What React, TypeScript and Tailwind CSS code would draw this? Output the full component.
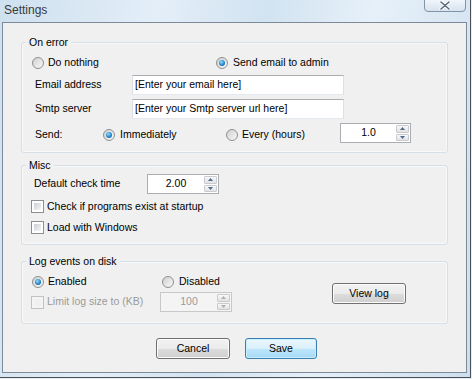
import React from "react";

const font = { fontFamily: '"Liberation Sans", Arial, sans-serif' };

function Radio({ checked, disabled }: { checked?: boolean; disabled?: boolean }) {
  return (
    <span
      className={
        "inline-flex w-[12px] h-[12px] rounded-full border items-center justify-center shrink-0 " +
        (disabled
          ? "border-[#b8b8b8] bg-[#f4f4f4]"
          : "border-[#8e8f8f] bg-[linear-gradient(135deg,#cfd0d2,#f8f8f8)]")
      }
    >
      {checked && (
        <span className="w-[6px] h-[6px] rounded-full bg-[radial-gradient(circle_at_40%_35%,#8fdcff,#2a86c8_55%,#0c4f8a)]" />
      )}
    </span>
  );
}

function Check({ disabled }: { disabled?: boolean }) {
  return (
    <span
      className={
        "inline-flex w-[13px] h-[13px] border p-[2px] shrink-0 " +
        (disabled ? "border-[#c2c2c2] bg-[#f4f4f4]" : "border-[#8e8f8f] bg-white")
      }
    >
      <span
        className={
          "block w-full h-full " +
          (disabled ? "bg-[#f0f0f0]" : "bg-[linear-gradient(135deg,#cbcfd5,#f6f6f6)]")
        }
      />
    </span>
  );
}

function Arrow({ up, disabled }: { up?: boolean; disabled?: boolean }) {
  return (
    <svg width="5" height="3" viewBox="0 0 5 3">
      <path d={up ? "M0 3 L2.5 0 L5 3Z" : "M0 0 L2.5 3 L5 0Z"} fill={disabled ? "#b0b0b0" : "#4f6b8c"} />
    </svg>
  );
}

function Spin({ value, w, disabled }: { value: string; w: string; disabled?: boolean }) {
  return (
    <div
      className={
        "flex h-[20px] border " +
        w +
        (disabled ? " border-[#c8c8c8] bg-[#f4f4f4] text-[#9a9a9a]" : " border-[#abadb3] bg-white text-black")
      }
    >
      <div className="flex-1 flex items-center justify-center">{value}</div>
      <div className="flex flex-col w-[13px] my-[1px] mr-[1px] gap-[1px]">
        <div className="flex-1 border border-[#c9cbd0] rounded-[1px] bg-[linear-gradient(#f8f8f8,#e2e2e2)] flex items-center justify-center">
          <Arrow up disabled={disabled} />
        </div>
        <div className="flex-1 border border-[#c9cbd0] rounded-[1px] bg-[linear-gradient(#f8f8f8,#e2e2e2)] flex items-center justify-center">
          <Arrow disabled={disabled} />
        </div>
      </div>
    </div>
  );
}

function TextBox({ value }: { value: string }) {
  return (
    <div className="flex items-center h-[20px] w-[212px] bg-white border border-[#dbdfe6] border-t-[#abadb3] border-b-[#e3e9ef] pl-[2px] text-black whitespace-nowrap overflow-hidden">
      {value}
    </div>
  );
}

function Btn({ label, primary, w }: { label: string; primary?: boolean; w: string }) {
  return (
    <div
      className={
        "flex items-center justify-center h-[21px] rounded-[3px] border text-black " +
        w +
        (primary
          ? " border-[#3c7fb1] bg-[linear-gradient(#eaf6fd_0%,#d9f0fc_50%,#bee6fd_50%,#a7d9f5_100%)] shadow-[inset_0_0_0_1px_#c6effd]"
          : " border-[#707070] bg-[linear-gradient(#f2f2f2_0%,#ebebeb_50%,#dddddd_50%,#cfcfcf_100%)] shadow-[inset_0_0_0_1px_#fcfcfc]")
      }
    >
      {label}
    </div>
  );
}

function Group({ title, children, className }: { title: string; children: React.ReactNode; className?: string }) {
  return (
    <div
      className={
        "relative ml-[18px] w-[427px] border border-[#d5dfe5] rounded-[3px] shadow-[inset_0_0_0_1px_#ffffff80] " +
        (className || "")
      }
    >
      <span className="absolute left-[4px] -top-[8px] px-[3px] bg-[#f0f0f0] leading-[14px] text-black">{title}</span>
      {children}
    </div>
  );
}

export default function App() {
  return (
    <div className="w-[472px] h-[379px] bg-[#e9eef3] text-[10.5px]" style={font}>
      <div className="w-[471px] h-[378px] border-r border-b border-[#4a4f55] bg-[linear-gradient(100deg,#cfe0ef_0%,#e3eef8_30%,#d2e3f1_50%,#e6f0f9_70%,#cddfee_100%)] flex flex-col">
        <div className="h-[22px] flex items-start justify-between">
          <span className="text-[12px] text-[#3a3a3a] pl-[4px] pt-[3px] leading-[14px]">Settings</span>
          <div className="mr-[4px] -mt-[1px] w-[42px] h-[13px] rounded-b-[4px] border border-[#8394a8] bg-[linear-gradient(#f0f5fa,#d6e3ef)] flex items-center justify-center">
            <svg width="12" height="9" viewBox="0 0 12 9">
              <path d="M2 1 L10 8 M10 1 L2 8" stroke="#ffffff" strokeWidth="3.2" strokeLinecap="round" />
              <path d="M2 1 L10 8 M10 1 L2 8" stroke="#5e6a78" strokeWidth="1.6" strokeLinecap="round" />
            </svg>
          </div>
        </div>
        <div className="ml-[2px] w-[465px] h-[351px] border border-[#7d8a99] bg-[#f0f0f0] flex flex-col">
          {/* On error */}
          <Group title="On error" className="mt-[19px] pt-[13px] pb-[9px]">
            <div className="flex items-center h-[14px] pl-[10px]">
              <div className="w-[184px] flex items-center gap-[4px]">
                <Radio />
                <span>Do nothing</span>
              </div>
              <div className="flex items-center gap-[5px]">
                <Radio checked />
                <span>Send email to admin</span>
              </div>
            </div>
            <div className="flex items-center mt-[5px] pl-[13px]">
              <span className="w-[97px]">Email address</span>
              <TextBox value="[Enter your email here]" />
            </div>
            <div className="flex items-center mt-[4px] pl-[13px]">
              <span className="w-[97px]">Smtp server</span>
              <TextBox value="[Enter your Smtp server url here]" />
            </div>
            <div className="flex items-center mt-[4px] pl-[13px]">
              <span className="w-[68px] pt-[3px]">Send:</span>
              <div className="w-[123px] flex items-center gap-[5px] pt-[3px]">
                <Radio checked />
                <span>Immediately</span>
              </div>
              <div className="w-[114px] flex items-center gap-[4px] pt-[3px]">
                <Radio />
                <span>Every (hours)</span>
              </div>
              <Spin value="1.0" w="w-[71px]" />
            </div>
          </Group>

          {/* Misc */}
          <Group title="Misc" className="mt-[12px] pt-[8px] pb-[10px]">
            <div className="flex items-center pl-[12px]">
              <span className="w-[113px]">Default check time</span>
              <Spin value="2.00" w="w-[72px]" />
            </div>
            <div className="flex items-center gap-[3px] pl-[9px] mt-[6px] h-[13px]">
              <Check />
              <span>Check if programs exist at startup</span>
            </div>
            <div className="flex items-center gap-[3px] pl-[9px] mt-[8px] h-[13px]">
              <Check />
              <span>Load with Windows</span>
            </div>
          </Group>

          {/* Log events */}
          <Group title="Log events on disk" className="mt-[16px] pb-[11px] flex items-start">
            <div className="w-[310px] pt-[13px]">
              <div className="flex items-center h-[14px] pl-[10px]">
                <div className="w-[130px] flex items-center gap-[4px]">
                  <Radio checked />
                  <span>Enabled</span>
                </div>
                <div className="flex items-center gap-[5px]">
                  <Radio />
                  <span>Disabled</span>
                </div>
              </div>
              <div className="flex items-center mt-[3px] pl-[9px]">
                <div className="w-[129px] flex items-center gap-[3px] text-[#9a9a9a]">
                  <Check disabled />
                  <span>Limit log size to (KB)</span>
                </div>
                <Spin value="100" w="w-[72px]" disabled />
              </div>
            </div>
            <div className="mt-[21px]">
              <Btn label="View log" w="w-[74px]" />
            </div>
          </Group>

          <div className="flex mt-[14px] pl-[153px] gap-[15px]">
            <Btn label="Cancel" w="w-[74px]" />
            <Btn label="Save" w="w-[72px]" primary />
          </div>
        </div>
      </div>
    </div>
  );
}
